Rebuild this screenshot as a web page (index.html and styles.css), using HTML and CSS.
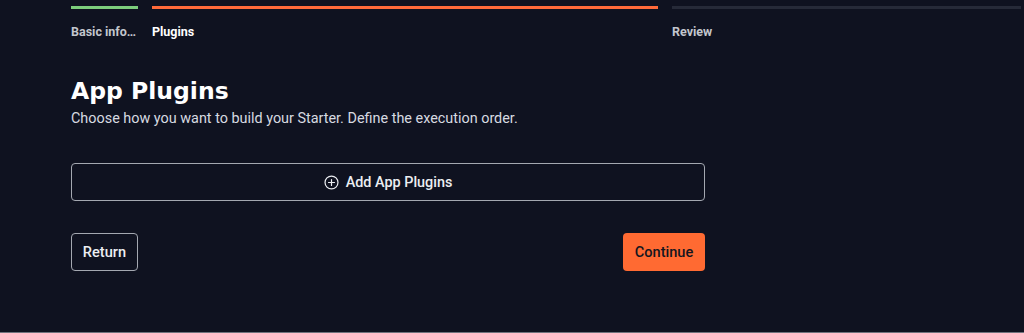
FILE: index.html
```html
<!DOCTYPE html>
<html>
<head>
<meta charset="utf-8">
<link rel="stylesheet" href="styles.css">
</head>
<body>
<div class="page">
  <div class="stepper">
    <div class="step step-basic done">
      <div class="bar"></div>
      <div class="label">Basic info…</div>
    </div>
    <div class="step step-plugins active">
      <div class="bar"></div>
      <div class="label">Plugins</div>
    </div>
    <div class="step step-review">
      <div class="bar"></div>
      <div class="label">Review</div>
    </div>
  </div>
  <div class="content">
    <h1 class="title">App Plugins</h1>
    <p class="subtitle">Choose how you want to build your Starter. Define the execution order.</p>
    <button class="add-btn">
      <svg class="plus-icon" width="15" height="15" viewBox="0 0 16 16" fill="none" stroke="currentColor" stroke-width="1.3" stroke-linecap="round">
        <circle cx="8" cy="8" r="6.9"/>
        <path d="M8 4.8v6.4M4.8 8h6.4"/>
      </svg>
      <span>Add App Plugins</span>
    </button>
    <div class="actions">
      <button class="btn btn-outline">Return</button>
      <button class="btn btn-primary">Continue</button>
    </div>
  </div>
</div>
</body>
</html>
```

FILE: styles.css
```css
html, body {
  margin: 0;
  padding: 0;
  height: 100%;
}
body {
  background: #0f1220;
  font-family: Roboto, "Liberation Sans", Arial, sans-serif;
  color: #ffffff;
  box-sizing: border-box;
  border-bottom: 1px solid #6f737d;
}
.page {
  padding-left: 71px;
  padding-top: 6px;
}
.stepper {
  display: flex;
  gap: 14px;
}
.step .bar {
  height: 3px;
  background: #262a38;
}
.step-basic { width: 67px; }
.step-plugins { width: 506px; }
.step-review { width: 349px; }
.step.done .bar { background: #7ccd7c; }
.step.active .bar { background: #ff6a3a; }
.step .label {
  margin-top: 16px;
  font-size: 12.5px;
  font-weight: 700;
  line-height: 14px;
  color: #c3c6cd;
  white-space: nowrap;
}
.step.active .label { color: #ffffff; }
.content {
  width: 634px;
  padding-top: 38px;
}
.title {
  margin: 0;
  font-family: "DejaVu Sans", Lato, sans-serif;
  font-weight: 700;
  font-size: 23.5px;
  line-height: 28px;
  color: #ffffff;
}
.subtitle {
  margin: 6px 0 0 0;
  font-size: 14.4px;
  line-height: 16px;
  color: #d7dae0;
}
.add-btn {
  margin-top: 36px;
  width: 634px;
  height: 38px;
  background: transparent;
  border: 1px solid #a4a8b1;
  border-radius: 4px;
  color: #eceef2;
  font-family: Roboto, "Liberation Sans", Arial, sans-serif;
  font-size: 14.4px;
  font-weight: 500;
  display: flex;
  align-items: center;
  justify-content: center;
  gap: 7px;
  padding: 0;
}
.plus-icon { display: block; }
.actions {
  margin-top: 32px;
  display: flex;
  justify-content: space-between;
}
.btn {
  height: 38px;
  border-radius: 4px;
  font-family: Roboto, "Liberation Sans", Arial, sans-serif;
  font-size: 14.6px;
  font-weight: 500;
  padding: 0 10px;
}
.btn-outline {
  width: 67px;
  background: transparent;
  border: 1px solid #a4a8b1;
  color: #eceef2;
}
.btn-primary {
  width: 82px;
  background: #ff6a32;
  border: none;
  color: #14161f;
}
```
